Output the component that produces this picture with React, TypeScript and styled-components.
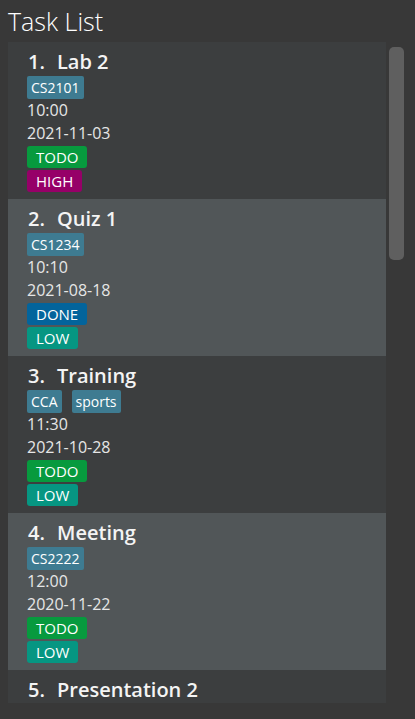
import React from "react";
import styled, { createGlobalStyle } from "styled-components";

type Status = "TODO" | "DONE";
type Priority = "HIGH" | "LOW";

interface ITask {
  name: string;
  tags: string[];
  time: string;
  date: string;
  status: Status;
  priority: Priority;
}

const tasks: ITask[] = [
  { name: "Lab 2", tags: ["CS2101"], time: "10:00", date: "2021-11-03", status: "TODO", priority: "HIGH" },
  { name: "Quiz 1", tags: ["CS1234"], time: "10:10", date: "2021-08-18", status: "DONE", priority: "LOW" },
  { name: "Training", tags: ["CCA", "sports"], time: "11:30", date: "2021-10-28", status: "TODO", priority: "LOW" },
  { name: "Meeting", tags: ["CS2222"], time: "12:00", date: "2020-11-22", status: "TODO", priority: "LOW" },
  { name: "Presentation 2", tags: ["CS2101"], time: "14:00", date: "2021-11-10", status: "TODO", priority: "HIGH" },
];

const labelColors: Record<string, string> = {
  TODO: "#079a3e",
  DONE: "#03649c",
  HIGH: "#960068",
  LOW: "#069682",
};

const GlobalStyle = createGlobalStyle`
  html, body {
    margin: 0;
    padding: 0;
    background: #383838;
  }

  body {
    font-family: "Open Sans", "Noto Sans", sans-serif;
  }
`;

const TaskCard = ({ task, index }: { task: ITask; index: number }) => {
  return (
    <Cell $odd={index % 2 === 0}>
      <TitleRow>
        <TaskId>{index + 1}.</TaskId>
        <TaskName>{task.name}</TaskName>
      </TitleRow>
      <Tags>
        {task.tags.map((tag) => (
          <Tag key={tag}>{tag}</Tag>
        ))}
      </Tags>
      <SmallText>{task.time}</SmallText>
      <SmallText>{task.date}</SmallText>
      <Label $color={labelColors[task.status]}>{task.status}</Label>
      <Label $color={labelColors[task.priority]} $gap={2}>
        {task.priority}
      </Label>
    </Cell>
  );
};

export default function App() {
  return (
    <Page>
      <GlobalStyle />
      <Heading>Task List</Heading>
      <ListPanel>
        <ListView>
          {tasks.map((task, i) => (
            <TaskCard key={task.name} task={task} index={i} />
          ))}
        </ListView>
        <ScrollTrack>
          <ScrollThumb />
        </ScrollTrack>
      </ListPanel>
    </Page>
  );
}

const Page = styled.div`
  width: 415px;
  height: 719px;
  background: #383838;
  display: flex;
  flex-direction: column;
  overflow: hidden;
`;

const Heading = styled.h1`
  margin: 0;
  padding: 4px 0 0 8px;
  height: 42px;
  box-sizing: border-box;
  font-size: 25px;
  line-height: 34px;
  font-weight: 300;
  color: #ffffff;
`;

const ListPanel = styled.div`
  display: flex;
  margin-left: 8px;
  height: 661px;
  width: 399px;
`;

const ListView = styled.div`
  width: 378px;
  height: 100%;
  overflow: hidden;
  display: flex;
  flex-direction: column;
`;

const ScrollTrack = styled.div`
  flex: 1;
  padding: 5px 3px 0 3px;
`;

const ScrollThumb = styled.div`
  height: 213px;
  background: #5f5f5f;
  border-radius: 5px;
`;

const Cell = styled.div<{ $odd: boolean }>`
  flex: none;
  height: 157px;
  box-sizing: border-box;
  padding: 6px 0 7px 19px;
  background: ${(p) => (p.$odd ? "#3c3e3f" : "#515658")};
  display: flex;
  flex-direction: column;
  align-items: flex-start;
`;

const TitleRow = styled.div`
  display: flex;
  height: 27px;
  line-height: 27px;
  font-size: 20px;
  font-weight: 600;
  color: #f4f4f4;
`;

const TaskId = styled.span`
  margin-left: 1px;
  width: 29px;
`;

const TaskName = styled.span``;

const Tags = styled.div`
  display: flex;
  gap: 10px;
  margin-top: 1px;
`;

const Tag = styled.span`
  height: 23px;
  box-sizing: border-box;
  padding: 0 4px;
  font-size: 14px;
  line-height: 23px;
  color: #ffffff;
  background: #3e7b91;
  border-radius: 2px;
`;

const SmallText = styled.div`
  font-size: 16px;
  line-height: 23px;
  color: #e6e6e6;
`;

const Label = styled.div<{ $color: string; $gap?: number }>`
  margin-top: ${(p) => p.$gap ?? 1}px;
  height: 22px;
  padding: 0 9px;
  font-size: 15px;
  line-height: 22px;
  color: #ffffff;
  background: ${(p) => p.$color};
  border-radius: 3px;
`;
